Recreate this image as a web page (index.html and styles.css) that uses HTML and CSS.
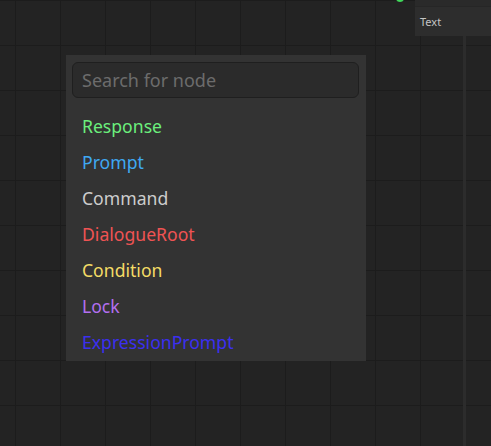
FILE: index.html
```html
<!DOCTYPE html>
<html>
<head>
<meta charset="utf-8">
<link rel="stylesheet" href="styles.css">
</head>
<body>
<div class="canvas">
  <div class="port-dot"></div>
  <div class="side-panel">
    <div class="side-top"></div>
    <div class="side-label">Text</div>
  </div>
  <div class="side-rule"></div>
  <div class="popup">
    <input class="search" type="text" placeholder="Search for node">
    <ul class="node-list">
      <li class="node response">Response</li>
      <li class="node prompt">Prompt</li>
      <li class="node command">Command</li>
      <li class="node root">DialogueRoot</li>
      <li class="node condition">Condition</li>
      <li class="node lock">Lock</li>
      <li class="node expr">ExpressionPrompt</li>
    </ul>
  </div>
</div>
</body>
</html>
```
FILE: styles.css
```css
html, body {
  margin: 0;
  padding: 0;
  width: 491px;
  height: 446px;
  overflow: hidden;
}
.canvas {
  position: relative;
  width: 491px;
  height: 446px;
  background-color: #232323;
  background-image:
    linear-gradient(to right, #1c1c1c 0, #1c1c1c 1px, transparent 1px),
    linear-gradient(to bottom, #1c1c1c 0, #1c1c1c 1px, transparent 1px);
  background-size: 45px 45px;
  background-position: 15px 0, 0 0;
  font-family: "Noto Sans", "Open Sans", sans-serif;
}
.port-dot {
  position: absolute;
  left: 396px;
  top: -6px;
  width: 8px;
  height: 8px;
  border-radius: 50%;
  background: #3fd85a;
}
.side-panel {
  position: absolute;
  left: 415px;
  top: 0;
  width: 76px;
  height: 36px;
  background: #2d2d2d;
  display: flex;
  flex-direction: column;
}
.side-top {
  height: 6px;
  background: #2a2a2a;
  border-bottom: 1px solid #262626;
}
.side-label {
  padding: 8px 0 0 5px;
  font-size: 11px;
  line-height: 14px;
  color: #c4c4c4;
}
.side-rule {
  position: absolute;
  left: 463px;
  top: 36px;
  width: 3px;
  bottom: 0;
  background: #2c2c2c;
}
.popup {
  position: absolute;
  left: 66px;
  top: 55px;
  width: 300px;
  height: 306px;
  box-sizing: border-box;
  background: #333333;
  padding: 7px 7px 0 6px;
  display: flex;
  flex-direction: column;
}
.search {
  box-sizing: border-box;
  width: 287px;
  height: 36px;
  margin: 0;
  padding: 0 9px;
  background: #2b2b2b;
  border: 1px solid #1f1f1f;
  border-radius: 6px;
  font-family: "Noto Sans", "Open Sans", sans-serif;
  font-size: 18px;
  color: #d0d0d0;
  outline: none;
}
.search::placeholder {
  color: #6c6c6c;
}
.node-list {
  list-style: none;
  margin: 10px 0 0 0;
  padding: 0;
}
.node {
  height: 36px;
  line-height: 36px;
  padding-left: 10px;
  font-size: 17.6px;
}
.response { color: #6bef7c; }
.prompt { color: #3fa8f2; }
.command { color: #cdcdcd; }
.root { color: #ef5353; }
.condition { color: #f3dc66; }
.lock { color: #b36ff0; }
.expr { color: #3b2ff0; }
```
